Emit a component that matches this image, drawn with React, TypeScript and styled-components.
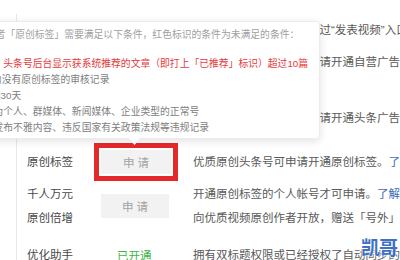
import styled, { createGlobalStyle, css } from 'styled-components';

const GlobalStyle = createGlobalStyle`
    html, body {
        margin: 0;
        padding: 0;
        background: #fff;
        overflow: hidden;
    }
    body {
        font-family: "Liberation Sans", "Noto Sans CJK SC", sans-serif;
    }
`;

const Page = styled.div`
    position: relative;
    width: 400px;
    height: 260px;
    overflow: hidden;
`;

const Panel = styled.div`
    margin-left: 16px;
    height: 100%;
    padding-left: 10px;
    border-left: 1px solid #e8e8e8;
    box-sizing: border-box;
`;

const Row = styled.div<{ $h: number; $mt: number }>`
    display: grid;
    grid-template-columns: 70px 86px 1fr;
    align-items: center;
    height: ${(p) => p.$h}px;
    margin-top: ${(p) => p.$mt}px;
    font-size: 11.5px;
`;

const Label = styled.div`
    color: #484848;
    line-height: 24px;
    white-space: nowrap;
`;

const Action = styled.div`
    display: flex;
    align-items: center;
`;

const ApplyButton = styled.div<{ $marked?: boolean }>`
    margin-left: 4px;
    width: 68px;
    height: 24px;
    display: flex;
    align-items: center;
    justify-content: center;
    background: #f2f2f2;
    color: #a3a3a3;
    ${(p) =>
        p.$marked &&
        css`
            width: 70px;
            outline: 5px solid #e5292b;
            outline-offset: 2px;
        `}
`;

const Status = styled.span`
    margin-left: 20px;
    color: #3db54b;
`;

const Desc = styled.div`
    padding-left: 10px;
    color: #595959;
    line-height: 24px;
    white-space: nowrap;
`;

const Link = styled.span`
    color: #3d6db5;
`;

const Tooltip = styled.div`
    position: absolute;
    left: -48px;
    top: 21px;
    width: 368px;
    box-sizing: border-box;
    padding: 5px 0 2px 10px;
    background: #fff;
    border: 1px solid #ececec;
    border-radius: 3px;
    box-shadow: 0 2px 8px rgba(0, 0, 0, 0.12);
    font-size: 9.8px;
    line-height: 16px;
    white-space: nowrap;
    z-index: 2;

    &::after {
        content: "";
        position: absolute;
        left: 177px;
        bottom: -5px;
        width: 8px;
        height: 8px;
        background: #fff;
        border-right: 1px solid #ececec;
        border-bottom: 1px solid #ececec;
        transform: rotate(45deg);
    }
`;

const TipTitle = styled.div`
    margin-left: 13px;
    margin-bottom: 13px;
    color: #a0a0a0;
`;

const TipItem = styled.div<{ $unmet?: boolean }>`
    color: ${(p) => (p.$unmet ? '#e5393c' : '#808080')};
`;

const Watermark = styled.div`
    position: absolute;
    left: 361px;
    top: 233px;
    font-size: 19px;
    font-weight: bold;
    color: #3f71c4;
    letter-spacing: -1px;
    text-shadow: 0 0 2px #fff, 0 0 2px #fff;
    z-index: 3;
`;

const conditions = [
    { text: '2. 要求：头条号后台显示获系统推荐的文章（即打上「已推荐」标识）超过10篇', unmet: true },
    { text: '3.30天内没有原创标签的审核记录' },
    { text: '4.入驻满30天' },
    { text: '5. 账号为个人、群媒体、新闻媒体、企业类型的正常号' },
    { text: '6. 从未发布不雅内容、违反国家有关政策法规等违规记录' },
];

export default function App() {
    return (
        <Page>
            <GlobalStyle />
            <Panel>
                <Row $h={32} $mt={14}>
                    <Label>视频</Label>
                    <Action><Status>已开通</Status></Action>
                    <Desc>开通后可在头条号后台通过“发表视频”入口上传视频</Desc>
                </Row>
                <Row $h={32} $mt={0}>
                    <Label>自营广告</Label>
                    <Action><Status>已开通</Status></Action>
                    <Desc>若需投放自有广告资源，请开通自营广告</Desc>
                </Row>
                <Row $h={32} $mt={24}>
                    <Label>头条广告</Label>
                    <Action><Status>已开通</Status></Action>
                    <Desc>若想获得头条广告收益，请开通头条广告</Desc>
                </Row>
                <Row $h={32} $mt={12}>
                    <Label>原创标签</Label>
                    <Action><ApplyButton $marked>申 请</ApplyButton></Action>
                    <Desc>优质原创头条号可申请开通原创标签。<Link>了解详情</Link></Desc>
                </Row>
                <Row $h={48} $mt={4}>
                    <Label>千人万元<br />原创倍增</Label>
                    <Action><ApplyButton>申 请</ApplyButton></Action>
                    <Desc>
                        开通原创标签的个人帐号才可申请。<Link>了解详情</Link>
                        <br />
                        向优质视频原创作者开放，赠送「号外」推广资源
                    </Desc>
                </Row>
                <Row $h={32} $mt={9}>
                    <Label>优化助手</Label>
                    <Action><Status>已开通</Status></Action>
                    <Desc>拥有双标题权限或已经授权了自动同步的帐号</Desc>
                </Row>
            </Panel>

            <Tooltip>
                <TipTitle>申请者「原创标签」需要满足以下条件，红色标识的条件为未满足的条件：</TipTitle>
                {conditions.map((c) => (
                    <TipItem key={c.text} $unmet={c.unmet}>{c.text}</TipItem>
                ))}
            </Tooltip>

            <Watermark>凯哥</Watermark>
        </Page>
    );
}
